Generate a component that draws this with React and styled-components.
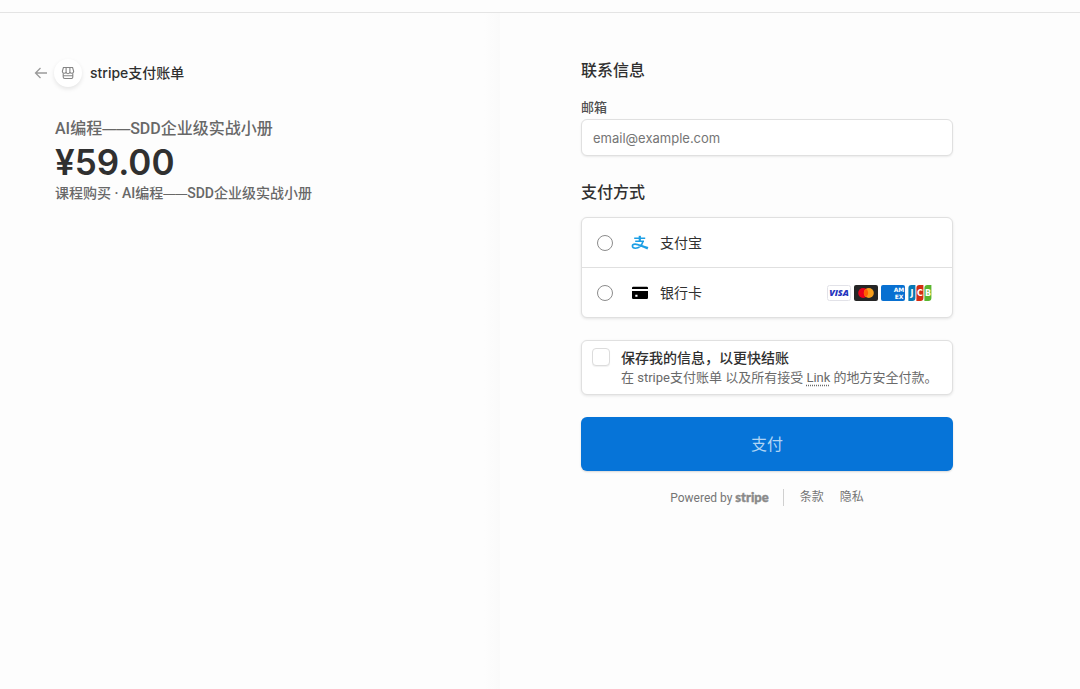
import React, {useState} from 'react';
import styled, {createGlobalStyle} from 'styled-components';

const GlobalStyle = createGlobalStyle`
  * {
    box-sizing: border-box;
  }
  body {
    margin: 0;
    background-color: #fdfdfd;
    color: #303030;
    font-family: Inter, "Noto Sans CJK SC", sans-serif;
    font-size: 14px;
    line-height: 20px;
  }
  h1, h2, p {
    margin: 0;
  }
`

const Page = styled.div`
  display: flex;
  flex-direction: column;
  min-height: 100vh;
`

const TopBar = styled.header`
  height: 13px;
  border-bottom: 1px solid #e4e4e4;
`

const Main = styled.main`
  display: grid;
  grid-template-columns: 25fr 29fr;
  flex: 1;
`

const Summary = styled.section`
  padding: 46px 24px 0 34px;
  background: linear-gradient(to right, #fdfdfd calc(100% - 16px), #fafafa);
`

const Checkout = styled.section`
  padding: 46px 24px 24px 81px;
`

const Merchant = styled.div`
  display: flex;
  align-items: center;
  font-weight: 500;
`

const BackButton = styled.button`
  display: flex;
  padding: 0;
  border: 0;
  background: none;
  color: #9a9a9a;
  cursor: pointer;
`

const Avatar = styled.span`
  display: flex;
  align-items: center;
  justify-content: center;
  width: 28px;
  height: 28px;
  margin: 0 8px 0 6px;
  border-radius: 50%;
  background-color: #fff;
  color: #858585;
  box-shadow: 0 2px 4px rgba(0, 0, 0, 0.1);
`

const Order = styled.div`
  display: flex;
  flex-direction: column;
  padding: 30px 0 0 21px;
  color: #686868;
  font-family: Roboto, "Noto Sans CJK SC", sans-serif;
`

const ProductName = styled.h1`
  font-size: 16px;
  font-weight: 500;
  line-height: 24px;
`

const Dash = styled.span`
  font-family: Inter, sans-serif;
  font-size: ${(props) => props.$size}px;
  font-weight: 400;
  line-height: 1;
`

const Price = styled.p`
  color: #303030;
  font-family: Inter, sans-serif;
  font-size: 35px;
  font-weight: 600;
  line-height: 43px;
`

const Description = styled.p`
  font-size: 14px;
  font-weight: 500;
  line-height: 18px;
`

const Form = styled.form`
  display: flex;
  flex-direction: column;
  max-width: 372px;
`

const Title = styled.h2`
  margin-bottom: ${(props) => props.$gap}px;
  font-size: 16px;
  font-weight: 500;
  line-height: 22px;
`

const Label = styled.label`
  margin-bottom: 2px;
  color: #505050;
  font-size: 13px;
  font-weight: 500;
`

const Input = styled.input`
  width: 100%;
  height: 37px;
  margin-bottom: 25px;
  padding: 0 11px;
  border: 1px solid #e0e0e0;
  border-radius: 6px;
  background-color: #fff;
  box-shadow: 0 1px 2px rgba(0, 0, 0, 0.08);
  color: #303030;
  font: inherit;
  font-size: 13px;

  &::placeholder {
    color: #757575;
  }
`

const Card = styled.div`
  margin-bottom: 22px;
  border: 1px solid #e0e0e0;
  border-radius: 6px;
  background-color: #fff;
  box-shadow: 0 1px 3px rgba(0, 0, 0, 0.1);
`

const Method = styled.label`
  display: flex;
  align-items: center;
  height: 49px;
  padding: 0 20px 0 15px;
  cursor: pointer;

  & + & {
    height: 50px;
    border-top: 1px solid #e0e0e0;
  }
`

const Radio = styled.input`
  appearance: none;
  width: 16px;
  height: 16px;
  margin: 0 18px 0 0;
  border: 1px solid #8c8c8c;
  border-radius: 50%;
  background-color: #fff;

  &:checked {
    border: 5px solid #0674d8;
  }
`

const MethodName = styled.span`
  flex: 1;
  margin-left: 11px;
`

const Brands = styled.span`
  display: flex;
  gap: 3px;
`

const Save = styled.label`
  display: flex;
  gap: 11px;
  padding: 7px 8px 6px 10px;
  cursor: pointer;
`

const Checkbox = styled.input`
  appearance: none;
  flex: none;
  width: 18px;
  height: 18px;
  margin: 0;
  border: 1px solid #dcdcdc;
  border-radius: 4px;
  background-color: #fff;
  box-shadow: 0 1px 1px rgba(0, 0, 0, 0.06);

  &:checked {
    background-color: #0674d8;
  }
`

const SaveText = styled.span`
  display: flex;
  flex-direction: column;
  color: #6a6a6a;
  font-family: Roboto, "Noto Sans CJK SC", sans-serif;
  font-size: 13px;

  strong {
    color: #303030;
    font-size: 14px;
    font-weight: 500;
  }
  a {
    color: inherit;
    text-decoration: underline dotted;
    text-underline-offset: 3px;
  }
`

const PayButton = styled.button`
  height: 54px;
  border: 0;
  border-radius: 6px;
  background-color: #0674d8;
  box-shadow: 0 1px 2px rgba(0, 0, 0, 0.15);
  color: #b0d4f4;
  font: inherit;
  font-size: 16px;
  cursor: pointer;
`

const Footer = styled.footer`
  display: flex;
  align-items: center;
  justify-content: center;
  gap: 16px;
  max-width: 372px;
  margin-top: 16px;
  color: #757575;
  font-family: Roboto, "Noto Sans CJK SC", sans-serif;
  font-size: 12px;

  a {
    color: inherit;
    text-decoration: none;
  }
`

const Powered = styled.a`
  padding-right: 14px;
  border-right: 1px solid #d0d0d0;
  line-height: 16px;

  b {
    color: #8a8a8a;
    font-family: "Liberation Sans Narrow", Lato, sans-serif;
    font-size: 13px;
    font-weight: 900;
    -webkit-text-stroke: 0.4px #8a8a8a;
  }
`

const ArrowIcon = () => (
  <svg width="14" height="14" viewBox="0 0 14 14" fill="none" stroke="currentColor" strokeWidth="1.3">
    <path d="M13 7H1.5M6.5 2L1.5 7l5 5" />
  </svg>
)

const StoreIcon = () => (
  <svg width="14" height="14" viewBox="0 0 14 14" fill="none" stroke="currentColor" strokeWidth="1.1">
    <path d="M2.4 1.5h9.2L12.6 5v.8a1.9 1.9 0 0 1-3.7 0 1.9 1.9 0 0 1-3.8 0 1.9 1.9 0 0 1-3.7 0V5zM5.1 1.5v4.3M8.9 1.5v4.3M2.2 7.7v3.2a1.6 1.6 0 0 0 1.6 1.6h6.4a1.6 1.6 0 0 0 1.6-1.6V7.7M2.2 9.8h9.6" />
  </svg>
)

const AlipayIcon = () => (
  <svg width="18" height="18" viewBox="0 0 18 18" fill="none" stroke="#1c9fe5">
    <path d="M3.2 4.2h11M4.2 7.2h8.8" strokeWidth="1.5" />
    <path d="M8.8 1.8v5.4" strokeWidth="2.2" />
    <path d="M12.1 7.2C11 10.6 8.2 14.2 4.4 14.2c-2 0-3-.8-3-2.1 0-1.2 1-2 2.7-2 3 0 5.4 1.5 8.2 2.5" strokeWidth="1.6" />
    <path d="M9 10.6l8.4 2.5-1 2.3-7.9-3.5z" fill="#1c9fe5" stroke="none" />
  </svg>
)

const CardIcon = () => (
  <svg width="18" height="18" viewBox="0 0 18 18">
    <path d="M1 5V4a1.2 1.2 0 0 1 1.2-1.2h13.6A1.2 1.2 0 0 1 17 4v1z" />
    <path fillRule="evenodd" d="M1 7h16v6.8a1.2 1.2 0 0 1-1.2 1.2H2.2A1.2 1.2 0 0 1 1 13.8zm3.3 3.7v2h2.2v-2z" />
  </svg>
)

const brandText = {
  fontFamily: 'DejaVu Sans, sans-serif',
  fontWeight: 700,
  textAnchor: 'middle',
}

const Visa = () => (
  <svg width="24" height="16" viewBox="0 0 24 16" role="img" aria-label="Visa">
    <rect x=".5" y=".5" width="23" height="15" rx="2" fill="#fff" stroke="#e2e2e8" />
    <text x="12" y="11.3" fontSize="9" fontStyle="italic" fontFamily="Open Sans, sans-serif" fontWeight="800" textAnchor="middle" fill="#2434bd">VISA</text>
  </svg>
)

const Mastercard = () => (
  <svg width="24" height="16" viewBox="0 0 24 16" role="img" aria-label="Mastercard">
    <rect width="24" height="16" rx="2" fill="#252525" />
    <circle cx="9.2" cy="8" r="5" fill="#eb001b" />
    <circle cx="14.8" cy="8" r="5" fill="#f79e1b" />
    <path d="M12 3.86a5 5 0 0 1 0 8.28 5 5 0 0 1 0-8.28z" fill="#ff5f00" />
  </svg>
)

const Amex = () => (
  <svg width="24" height="16" viewBox="0 0 24 16" role="img" aria-label="American Express">
    <rect width="24" height="16" rx="2" fill="#0870d1" />
    <text x="18" y="7" fontSize="6" fill="#fff" {...brandText}>AM</text>
    <text x="18" y="14" fontSize="6" fill="#fff" {...brandText}>EX</text>
  </svg>
)

const Jcb = () => (
  <svg width="24" height="16" viewBox="0 0 24 16" role="img" aria-label="JCB">
    <path d="M3.4 0H7.4v13a3 3 0 0 1-3 3H.4V3a3 3 0 0 1 3-3z" fill="#0879b5" />
    <path d="M11.4 0h4v13a3 3 0 0 1-3 3h-4V3a3 3 0 0 1 3-3z" fill="#d42d12" />
    <path d="M19.4 0h4v13a3 3 0 0 1-3 3h-4V3a3 3 0 0 1 3-3z" fill="#5ab52f" />
    <g fontSize="8" fill="#fff" {...brandText}>
      <text x="4" y="11">J</text>
      <text x="12" y="11">C</text>
      <text x="20" y="11">B</text>
    </g>
  </svg>
)

function App(){
  const [email, setEmail] = useState('');
  const [method, setMethod] = useState('');
  const [save, setSave] = useState(false);

  return(
    <Page>
      <GlobalStyle />
      <TopBar />
      <Main>
        <Summary>
          <Merchant>
            <BackButton type="button" aria-label="返回"><ArrowIcon /></BackButton>
            <Avatar><StoreIcon /></Avatar>
            stripe支付账单
          </Merchant>
          <Order>
            <ProductName>AI编程<Dash $size={14}>——</Dash>SDD企业级实战小册</ProductName>
            <Price>¥59.00</Price>
            <Description>课程购买 · AI编程<Dash $size={12}>——</Dash>SDD企业级实战小册</Description>
          </Order>
        </Summary>
        <Checkout>
          <Form onSubmit={(e) => e.preventDefault()}>
            <Title $gap={16}>联系信息</Title>
            <Label htmlFor="email">邮箱</Label>
            <Input
              id="email"
              type="email"
              value={email}
              onChange={(e) => setEmail(e.target.value)}
              placeholder="email@example.com"
            />
            <Title $gap={14}>支付方式</Title>
            <Card>
              <Method>
                <Radio type="radio" name="method" checked={method === 'alipay'} onChange={() => setMethod('alipay')} />
                <AlipayIcon />
                <MethodName>支付宝</MethodName>
              </Method>
              <Method>
                <Radio type="radio" name="method" checked={method === 'card'} onChange={() => setMethod('card')} />
                <CardIcon />
                <MethodName>银行卡</MethodName>
                <Brands>
                  <Visa />
                  <Mastercard />
                  <Amex />
                  <Jcb />
                </Brands>
              </Method>
            </Card>
            <Card>
              <Save>
                <Checkbox type="checkbox" checked={save} onChange={() => setSave(!save)} />
                <SaveText>
                  <strong>保存我的信息，以更快结账</strong>
                  <span>在 stripe支付账单 以及所有接受 <a href="#link">Link</a> 的地方安全付款。</span>
                </SaveText>
              </Save>
            </Card>
            <PayButton type="submit">支付</PayButton>
          </Form>
          <Footer>
            <Powered href="#stripe">Powered by <b>stripe</b></Powered>
            <a href="#terms">条款</a>
            <a href="#privacy">隐私</a>
          </Footer>
        </Checkout>
      </Main>
    </Page>
  );
}

export default App;
